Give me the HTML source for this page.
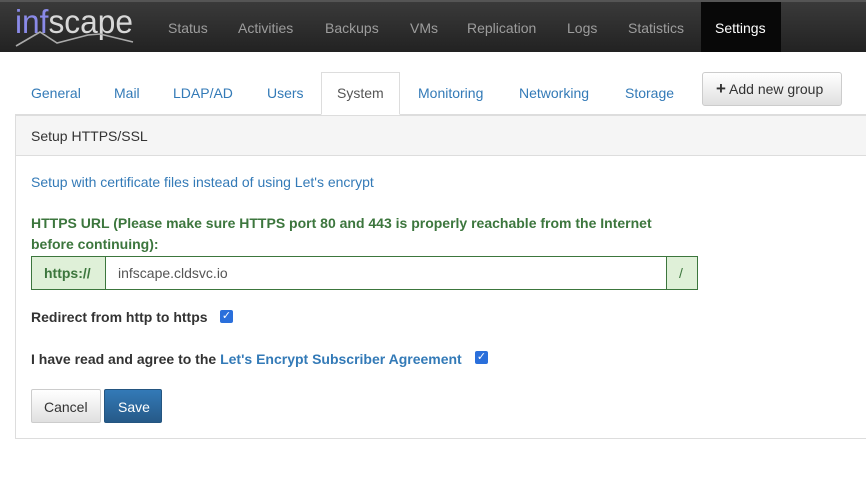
<!DOCTYPE html>
<html><head><style>
*{box-sizing:border-box;margin:0;padding:0}
body{width:866px;height:500px;overflow:hidden;background:#fff;font-family:"Liberation Sans",sans-serif;font-size:14px;color:#333;position:relative}
.nav{position:absolute;left:0;top:0;width:866px;height:52px;background:linear-gradient(#3a3a3a,#222);border-top:2px solid #555}
.nav a{position:absolute;top:18px;color:#9d9d9d;font-size:14px;text-decoration:none}
.act{position:absolute;left:701px;top:0;width:80px;height:50px;background:#080808}
.tab{position:absolute;top:85px;color:#337ab7;font-size:14px}
.a{position:absolute}
</style></head><body>
<div class="nav">
<div class="act"></div>
<svg class="a" style="left:0;top:-2px" width="150" height="50">
<text x="15" y="33" font-family="Liberation Sans" font-size="33" textLength="118" lengthAdjust="spacingAndGlyphs"><tspan fill="#8a8ae8">inf</tspan><tspan fill="#d8d8d8">scape</tspan></text>
<polyline points="16,46 40,32 57,43 88,35 100,34 133,42" fill="none" stroke="#aaa" stroke-width="1.6"/>
</svg>
<a style="left:168px">Status</a><a style="left:238px">Activities</a><a style="left:325px">Backups</a><a style="left:410px">VMs</a><a style="left:467px">Replication</a><a style="left:567px">Logs</a><a style="left:628px">Statistics</a><a style="left:715px;color:#fff">Settings</a>
</div>
<div class="a" style="left:15px;top:114px;width:860px;border-top:1px solid #ddd"></div>
<div class="a" style="left:321px;top:72px;width:79px;height:43px;border:1px solid #ddd;border-bottom:1px solid #fff;background:#fff"></div>
<span class="tab" style="left:31px">General</span><span class="tab" style="left:114px">Mail</span><span class="tab" style="left:173px">LDAP/AD</span><span class="tab" style="left:267px">Users</span><span class="tab" style="left:337px;color:#555">System</span><span class="tab" style="left:418px">Monitoring</span><span class="tab" style="left:519px">Networking</span><span class="tab" style="left:625px">Storage</span>
<div class="a" style="left:702px;top:72px;width:140px;height:34px;border:1px solid #ccc;border-radius:3px;background:linear-gradient(#fff,#e0e0e0);padding:8px 0 0 13px;font-size:14px"><b style="font-size:17px;line-height:10px">+</b> Add new group</div>
<div class="a" style="left:15px;top:115px;width:860px;height:324px;border:1px solid #ddd">
<div style="height:40px;background:#f5f5f5;border-bottom:1px solid #ddd;padding:12px 15px;font-size:14px">Setup HTTPS/SSL</div>
</div>
<div class="a" style="left:31px;top:174px;color:#337ab7">Setup with certificate files instead of using Let's encrypt</div>
<div class="a" style="left:31px;top:213px;width:640px;color:#3c763d;font-weight:bold;line-height:21px">HTTPS URL (Please make sure HTTPS port 80 and 443 is properly reachable from the Internet before continuing):</div>
<div class="a" style="left:31px;top:256px;width:667px;height:34px;border:1px solid #3c763d;display:flex">
<div style="width:74px;background:#dff0d8;color:#3c763d;font-weight:bold;border-right:1px solid #3c763d;padding:8px 0 0 12px">https://</div>
<div style="flex:1;padding:8px 12px;color:#555">infscape.cldsvc.io</div>
<div style="width:31px;background:#dff0d8;color:#3c763d;border-left:1px solid #3c763d;padding:8px 0 0 12px">/</div>
</div>
<div class="a" style="left:31px;top:309px;font-weight:bold">Redirect from http to https</div>
<div class="a" style="left:220px;top:310px;width:13px;height:13px;background:#2a6fdb;border-radius:2px;color:#fff;font-size:11px;line-height:13px;text-align:center">✓</div>
<div class="a" style="left:31px;top:351px;font-weight:bold">I have read and agree to the <span style="color:#337ab7">Let's Encrypt Subscriber Agreement</span></div>
<div class="a" style="left:475px;top:351px;width:13px;height:13px;background:#2a6fdb;border-radius:2px;color:#fff;font-size:11px;line-height:13px;text-align:center">✓</div>
<div class="a" style="left:31px;top:389px;width:70px;height:34px;border:1px solid #ccc;border-radius:2px;background:linear-gradient(#fff,#e0e0e0);padding:9px 0 0 12px">Cancel</div>
<div class="a" style="left:104px;top:389px;width:58px;height:34px;border:1px solid #245580;border-radius:2px;background:linear-gradient(#337ab7,#265a88);color:#fff;padding:9px 0 0 13px">Save</div>
</body></html>
